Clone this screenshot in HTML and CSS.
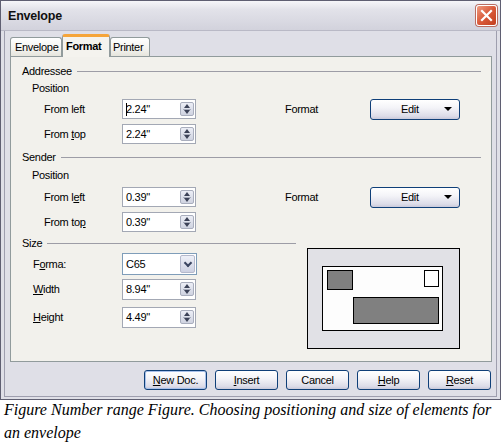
FILE: index.html
```html
<!DOCTYPE html>
<html>
<head>
<meta charset="utf-8">
<link rel="stylesheet" href="styles.css">
</head>
<body>
<div class="dialog">
  <div class="titlebar">
    <span class="title">Envelope</span>
    <div class="close">
      <svg width="21" height="21" viewBox="0 0 21 21"><path d="M6 6 L15 15 M15 6 L6 15" stroke="#fff" stroke-width="2.2" stroke-linecap="square"/></svg>
    </div>
  </div>
  <div class="frame">
    <div class="tabs">
      <div class="tab">Envelope</div>
      <div class="tab active">Format</div>
      <div class="tab">Printer</div>
    </div>
    <div class="panel">
      <div class="head head-first"><span>Addressee</span><i class="rule"></i></div>
      <div class="sub">Position</div>
      <div class="row row-a1">
        <span class="lbl">From left</span>
        <div class="field"><span class="caret"></span>2.24"<span class="spin"></span></div>
        <span class="rlabel">Format</span>
        <div class="edit"><span>Edit</span><span class="tri"></span></div>
      </div>
      <div class="row">
        <span class="lbl">From <u>t</u>op</span>
        <div class="field">2.24"<span class="spin"></span></div>
      </div>
      <div class="head head-sender"><span>Sender</span><i class="rule"></i></div>
      <div class="sub sub-sender">Position</div>
      <div class="row row-s1">
        <span class="lbl">From l<u>e</u>ft</span>
        <div class="field">0.39"<span class="spin"></span></div>
        <span class="rlabel">Format</span>
        <div class="edit"><span>Edit</span><span class="tri"></span></div>
      </div>
      <div class="row">
        <span class="lbl">From to<u>p</u></span>
        <div class="field">0.39"<span class="spin"></span></div>
      </div>
      <div class="size">
        <div class="size-left">
          <div class="head"><span>Size</span><i class="rule"></i></div>
          <div class="row row-format">
            <span class="lbl lbl-size">F<u>o</u>rma:</span>
            <div class="field combo">C65<span class="drop"></span></div>
          </div>
          <div class="row row-width">
            <span class="lbl lbl-size"><u>W</u>idth</span>
            <div class="field tall">8.94"<span class="spin"></span></div>
          </div>
          <div class="row row-height">
            <span class="lbl lbl-size"><u>H</u>eight</span>
            <div class="field tall">4.49"<span class="spin"></span></div>
          </div>
        </div>
        <div class="preview">
          <svg width="153" height="101" viewBox="0 0 153 101">
            <rect x="0.5" y="0.5" width="152" height="100" fill="#e1e1e6" stroke="#000"/>
            <rect x="15.5" y="18.5" width="120" height="64" fill="#fdfdfd" stroke="#000"/>
            <rect x="20.5" y="22.5" width="25" height="19" fill="#808080" stroke="#000"/>
            <rect x="117.5" y="22.5" width="14" height="16" fill="#fff" stroke="#000"/>
            <rect x="46.5" y="49.5" width="85" height="26" fill="#808080" stroke="#000"/>
          </svg>
        </div>
      </div>
    </div>
    <div class="buttons">
      <div class="btn default"><u>N</u>ew Doc.</div>
      <div class="btn"><u>I</u>nsert</div>
      <div class="btn">Cancel</div>
      <div class="btn"><u>H</u>elp</div>
      <div class="btn"><u>R</u>eset</div>
    </div>
  </div>
</div>
<p class="caption">Figure Number range Figure. Choosing positioning and size of elements for an envelope</p>
</body>
</html>
```

FILE: styles.css
```css
* { box-sizing: border-box; }

body {
  margin: 0;
  background: #fff;
  font-family: "Liberation Sans", Arial, sans-serif;
  font-size: 11px;
  letter-spacing: -0.3px;
  color: #000;
}

u { text-decoration: underline; text-underline-offset: 1px; }

.dialog {
  width: 501px;
  height: 400px;
  border: 1px solid #5f5f72;
  background: #dfdfe7;
  display: flex;
  flex-direction: column;
}

.titlebar {
  height: 30px;
  flex: none;
  display: flex;
  align-items: center;
  padding: 0 3px 0 7px;
  background: linear-gradient(#f6f6f9, #e2e2e9 30%, #d9d9e2 70%, #d2d2dc);
  border-bottom: 1px solid #b9b9c6;
}

.title {
  font-size: 12.5px;
  font-weight: bold;
  letter-spacing: -0.2px;
  color: #101010;
}

.close {
  margin-left: auto;
  width: 21px;
  height: 21px;
  border-radius: 3px;
  border: 1px solid #fff;
  background: linear-gradient(135deg, #ee9b80, #d95a3a 50%, #c23e1e);
  box-shadow: 0 0 0 1px #b96d62;
  display: flex;
  align-items: center;
  justify-content: center;
}

.close svg { display: block; margin: -1px; }

.frame {
  flex: 1;
  margin: 0 3px 2px;
  border: 1px solid #9e9eae;
  border-top: none;
  padding: 3px 4px 0 5px;
  display: flex;
  flex-direction: column;
}

.tabs {
  display: flex;
  height: 22px;
  align-items: flex-end;
  position: relative;
  z-index: 1;
}

.tab {
  height: 19px;
  padding: 0 4px;
  border: 1px solid #919b9c;
  border-bottom: none;
  border-radius: 3px 3px 0 0;
  background: linear-gradient(#ffffff, #f3f3ef 60%, #e6e5dd);
  display: flex;
  align-items: center;
  font-size: 11px;
}

.tab:first-child { width: 52px; }
.tab:last-child { width: 40px; padding-left: 2px; }

.tab.active {
  height: 23px;
  width: 48px;
  margin-bottom: -1px;
  background: #f4f3ee;
  border-top: 3px solid #f5a53a;
  border-left-color: #919b9c;
  font-weight: bold;
  padding: 0 3px 2px;
  border-radius: 3px 3px 0 0;
}

.panel {
  height: 306px;
  flex: none;
  border: 1px solid #919b9c;
  background: #f2f1ec;
  padding: 7px 10px 0 11px;
}

.head {
  height: 14px;
  display: flex;
  align-items: center;
}

.rule {
  flex: 1;
  height: 1px;
  background: #9d9da6;
  margin-left: 5px;
}

.sub {
  height: 14px;
  margin-top: 3px;
  margin-left: 10px;
  display: flex;
  align-items: center;
}

.row {
  height: 20px;
  margin-top: 5px;
  display: flex;
  align-items: center;
}

.row-a1 { margin-top: 4px; }

.head-sender { margin-top: 6px; }
.sub-sender { margin-top: 4px; }
.row-s1 { margin-top: 5px; }

.lbl {
  width: 78px;
  margin-left: 22px;
}

.lbl-size {
  width: 89px;
  margin-left: 11px;
}

.field {
  width: 74px;
  height: 20px;
  border: 1px solid #a3a8b4;
  background: #fff;
  display: flex;
  align-items: center;
  padding-left: 3px;
  position: relative;
}

.field.tall { height: 21px; }

.caret {
  position: absolute;
  left: 3px;
  top: 3px;
  width: 1px;
  height: 13px;
  background: #000;
}

.spin {
  margin-left: auto;
  margin-right: 1px;
  width: 14px;
  height: 14px;
  border: 1px solid #a9aebd;
  border-radius: 2px;
  background:
    linear-gradient(#a9aebd, #a9aebd) center / 8px 1px no-repeat,
    linear-gradient(#eceef6, #cfd3e0);
  position: relative;
}

.spin::before,
.spin::after {
  content: "";
  position: absolute;
  left: 3px;
  width: 0;
  height: 0;
  border-left: 3.5px solid transparent;
  border-right: 3.5px solid transparent;
}

.spin::before {
  top: 1px;
  border-bottom: 4px solid #3c4257;
}

.spin::after {
  bottom: 1px;
  border-top: 4px solid #3c4257;
}

.combo {
  height: 22px;
  width: 75px;
  border-color: #7f9db9;
}

.drop {
  margin-left: auto;
  margin-right: 1px;
  width: 15px;
  height: 18px;
  border: 1px solid #b5b9cc;
  border-radius: 2px;
  background: linear-gradient(#eef0f8, #cdd1e2);
  position: relative;
}

.drop::after {
  content: "";
  position: absolute;
  left: 4px;
  top: 4px;
  width: 4px;
  height: 4px;
  border-right: 2px solid #3a4560;
  border-bottom: 2px solid #3a4560;
  transform: rotate(45deg);
}

.row-format { margin-top: 3px; height: 22px; }
.row-width { margin-top: 3px; height: 22px; }
.row-height { margin-top: 6px; height: 22px; }

.rlabel {
  width: 85px;
  margin-left: 89px;
}

.edit {
  width: 90px;
  height: 21px;
  border: 1px solid #0f3f78;
  border-radius: 3px;
  background: linear-gradient(#ffffff, #f4f4f8 40%, #dcdce8 85%, #c9c9da);
  display: flex;
  align-items: center;
  padding-left: 30px;
  padding-right: 7px;
}

.tri {
  margin-left: auto;
  width: 0;
  height: 0;
  border-left: 4px solid transparent;
  border-right: 4px solid transparent;
  border-top: 4px solid #000;
}

.size {
  display: flex;
  margin-top: 4px;
}

.size-left { width: 274px; }

.preview {
  margin-left: 11px;
  margin-top: 12px;
}

.preview svg { display: block; }

.buttons {
  display: flex;
  justify-content: flex-end;
  gap: 8px;
  margin-top: 8px;
  padding-right: 1px;
}

.btn {
  width: 63px;
  height: 20px;
  border: 1px solid #0f3f78;
  border-radius: 3px;
  background: linear-gradient(#ffffff, #f4f4f8 40%, #dcdce8 85%, #c9c9da);
  display: flex;
  align-items: center;
  justify-content: center;
}

.btn.default {
  box-shadow: inset 0 0 0 1px #a9c1ea;
}

.caption {
  margin: -2px 0 0;
  padding: 0 0 0 4px;
  font-family: "Liberation Serif", "Times New Roman", serif;
  font-style: italic;
  font-size: 16px;
  line-height: 23px;
  letter-spacing: 0;
  width: 504px;
}
```
